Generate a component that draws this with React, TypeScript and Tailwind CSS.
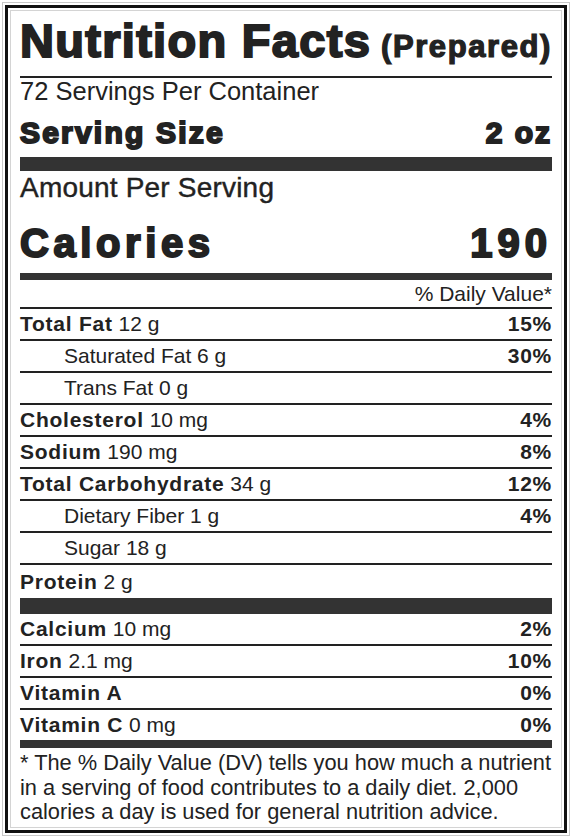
const heavy = "[-webkit-text-stroke:2px_#222]";

type Row = {
  label: string;
  amount?: string;
  pct?: string;
  bold?: boolean;
};

const fatRows: Row[] = [
  { label: "Total Fat", amount: "12 g", pct: "15%", bold: true },
  { label: "Saturated Fat", amount: "6 g", pct: "30%" },
  { label: "Trans Fat", amount: "0 g" },
  { label: "Cholesterol", amount: "10 mg", pct: "4%", bold: true },
  { label: "Sodium", amount: "190 mg", pct: "8%", bold: true },
  { label: "Total Carbohydrate", amount: "34 g", pct: "12%", bold: true },
  { label: "Dietary Fiber", amount: "1 g", pct: "4%" },
  { label: "Sugar", amount: "18 g" },
];

const vitaminRows: Row[] = [
  { label: "Calcium", amount: "10 mg", pct: "2%", bold: true },
  { label: "Iron", amount: "2.1 mg", pct: "10%", bold: true },
  { label: "Vitamin A", pct: "0%", bold: true },
  { label: "Vitamin C", amount: "0 mg", pct: "0%", bold: true },
];

const Rule = () => <div className="h-[2px] bg-[#222]" />;

const NutrientRow = ({ row, tall }: { row: Row; tall?: boolean }) => (
  <div
    className={`flex items-center justify-between text-[21px] leading-none ${
      tall ? "h-[33px]" : "h-[30px] pb-[2px]"
    }`}
  >
    <div className={row.bold ? "" : "pl-[44px]"}>
      {row.bold ? (
        <span className="font-bold tracking-[0.75px]">{row.label}</span>
      ) : (
        <span>{row.label}</span>
      )}
      {row.amount && <span> {row.amount}</span>}
    </div>
    {row.pct && <span className="font-bold tracking-[0.75px]">{row.pct}</span>}
  </div>
);

export default function App() {
  return (
    <div className="w-[572px] h-[838px] bg-white p-[2px] font-['Liberation_Sans',Arial,sans-serif] text-[#222]">
      <div className="h-full border border-[#c8c8c8] p-[2px]">
        <div className="h-full border-[3px] border-[#111] p-[2px]">
          <div className="h-full border border-[#d4d4d4] px-[9px]">
            {/* header */}
            <div className="h-[65px] pt-[6px] flex items-baseline justify-between leading-none">
              <span className={`text-[47px] font-bold tracking-[1.3px] ${heavy}`}>
                Nutrition Facts
              </span>
              <span className="text-[31px] font-bold tracking-[1.6px] [-webkit-text-stroke:1.2px_#222]">
                (Prepared)
              </span>
            </div>
            <Rule />
            <div className="h-[27px] flex items-center text-[25.5px] leading-none">
              72 Servings Per Container
            </div>
            <div className="h-[52px] pt-[4px] flex items-center justify-between leading-none">
              <span className={`text-[30px] font-bold tracking-[2.2px] ${heavy}`}>Serving Size</span>
              <span className={`text-[30px] font-bold tracking-[2px] ${heavy}`}>2 oz</span>
            </div>
            <div className="h-[14px] bg-[#333]" />
            <div className="h-[34px] flex items-center text-[28px] leading-none tracking-[0.2px] [-webkit-text-stroke:0.4px_#222]">
              Amount Per Serving
            </div>
            <div className="h-[68px] pt-[7px] flex items-center justify-between leading-none">
              <span className={`text-[40px] font-bold tracking-[4.6px] ${heavy}`}>Calories</span>
              <span className={`text-[40px] font-bold tracking-[5px] ${heavy}`}>190</span>
            </div>
            <div className="h-[7px] bg-[#333]" />
            <div className="h-[27px] flex items-center justify-end text-[21px] leading-none">
              % Daily Value*
            </div>
            <Rule />
            {fatRows.map((r) => (
              <div key={r.label}>
                <NutrientRow row={r} />
                <Rule />
              </div>
            ))}
            <NutrientRow row={{ label: "Protein", amount: "2 g", bold: true }} tall />
            <div className="h-[16px] bg-[#333]" />
            {vitaminRows.map((r, i) => (
              <div key={r.label}>
                <NutrientRow row={r} />
                {i < vitaminRows.length - 1 && <Rule />}
              </div>
            ))}
            <div className="h-[8px] bg-[#333]" />
            <div className="pt-[3px] text-[21.8px] leading-[24.5px] whitespace-nowrap">
              <div>* The % Daily Value (DV) tells you how much a nutrient</div>
              <div>in a serving of food contributes to a daily diet. 2,000</div>
              <div>calories a day is used for general nutrition advice.</div>
            </div>
          </div>
        </div>
      </div>
    </div>
  );
}
